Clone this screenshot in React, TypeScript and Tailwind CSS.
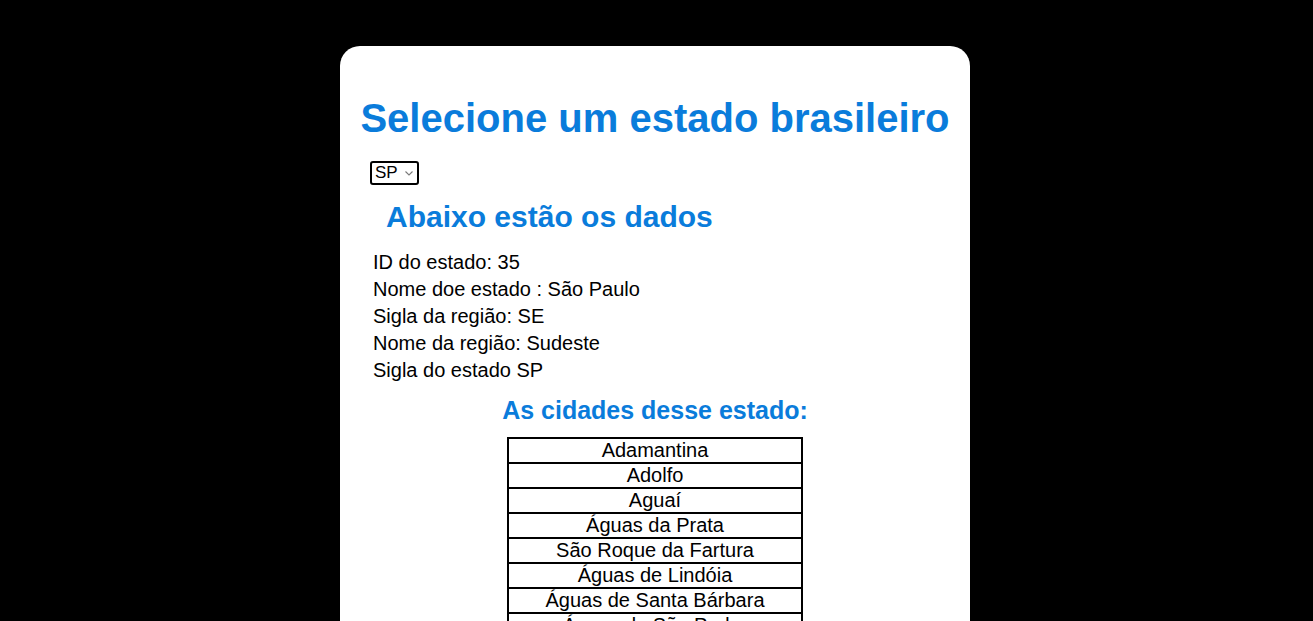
import React from 'react';

const estado = {
  id: 35,
  nome: 'São Paulo',
  sigla: 'SP',
  regiao: { sigla: 'SE', nome: 'Sudeste' },
};

const cidades = [
  'Adamantina',
  'Adolfo',
  'Aguaí',
  'Águas da Prata',
  'São Roque da Fartura',
  'Águas de Lindóia',
  'Águas de Santa Bárbara',
  'Águas de São Pedro',
  'Agudos',
  'Alambari',
  'Alfredo Marcondes',
  'Altair',
];

export default function App() {
  return (
    <div className="min-h-screen bg-black pt-[46px] pr-[3px] pb-10 font-['Liberation_Sans',Arial,sans-serif] text-black">
      <div className="mx-auto w-[630px] rounded-[20px] bg-white pt-[49px] pb-10">
        <h1 className="text-center text-[40px] leading-[46px] font-bold text-[#0a7cdb]">
          Selecione um estado brasileiro
        </h1>

        <div className="px-[30px]">
          {/* select com seta fina */}
          <div className="relative mt-5 inline-block">
            <select
              defaultValue="SP"
              className="block h-[24px] w-[49px] appearance-none rounded-[3px] border-2 border-black bg-white pl-[3px] text-[17px] leading-[20px] text-black"
            >
              <option value="SP">SP</option>
              <option value="RJ">RJ</option>
              <option value="MG">MG</option>
            </select>
            <svg
              className="pointer-events-none absolute top-[10px] right-[6px]"
              width="8"
              height="5"
              viewBox="0 0 8 5"
              fill="none"
            >
              <path d="M0.5 0.5 L4 4 L7.5 0.5" stroke="#7a7a7a" strokeWidth="1.1" />
            </svg>
          </div>

          <h2 className="mt-[14px] ml-4 text-[30px] leading-[35px] font-bold text-[#0a7cdb]">
            Abaixo estão os dados
          </h2>

          <div className="mt-[15px] ml-[3px] text-[20px] leading-[27px]">
            <p>ID do estado: {estado.id}</p>
            <p>Nome doe estado : {estado.nome}</p>
            <p>Sigla da região: {estado.regiao.sigla}</p>
            <p>Nome da região: {estado.regiao.nome}</p>
            <p>Sigla do estado {estado.sigla}</p>
          </div>

          <h3 className="mt-3 text-center text-[25px] leading-[29px] font-bold text-[#0a7cdb]">
            As cidades desse estado:
          </h3>

          <table className="mx-auto mt-3 w-[296px] border-collapse border-2 border-black">
            <tbody>
              {cidades.map((c) => (
                <tr key={c}>
                  <td className="border-2 border-black p-0 text-center text-[20px] leading-[23px]">{c}</td>
                </tr>
              ))}
            </tbody>
          </table>
        </div>
      </div>
    </div>
  );
}
